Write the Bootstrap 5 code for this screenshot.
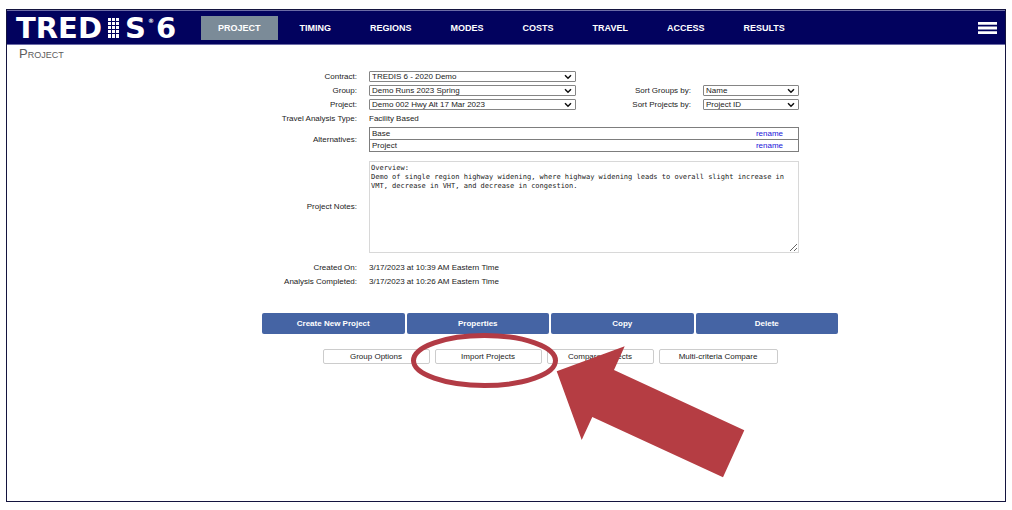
<!DOCTYPE html>
<html lang="en">
<head>
<meta charset="utf-8">
<meta name="viewport" content="width=device-width, initial-scale=1">
<title>TREDIS 6 - Project</title>
<link href="https://cdn.jsdelivr.net/npm/bootstrap@5.3.0/dist/css/bootstrap.min.css" rel="stylesheet">
<style>
  body { font-family: "Liberation Sans", Arial, sans-serif; font-size: 8px; line-height: 11px; color: #222; background: #fff; padding: 9px 6px 8px; }
  .app-frame { border: 1px solid #14143f; }
  .app-bar { background: #02025e; border: solid #6c6ca6; border-width: 1px 0; padding: 0 8px 0 9px; height: 35px; }
  .brand-logo { font: bold 29px/28px "DejaVu Sans", sans-serif; color: #fff; width: 185px; gap: 6px; }
  .brand-logo:hover { color: #fff; }
  .brand-logo sup { font-size: 6px; line-height: 6px; top: 0; margin: 4px -4px 0; align-self: flex-start; }
  .app-bar .nav-link { font-size: 9px; line-height: 12px; font-weight: bold; color: #fff; padding: 6px 17px; border-radius: 0; }
  .app-bar .nav-link.active { background: #7b8b98; color: #fff; }
  .main-nav { gap: 5px; }
  .menu-btn { line-height: 0; }
  .page-title { font-size: 13px; line-height: 16px; font-variant: small-caps; color: #5c5c5c; padding: 1px 0 9px 12px; }
  .work-area { padding-left: 88px; }
  .work-col { max-width: 576px; }
  .project-form { display: grid; grid-template-columns: 95px 207px 1fr 96px; column-gap: 12px; row-gap: 3px; margin-right: 39px; align-items: center; }
  .project-form label, .field-name { text-align: right; line-height: 10px; }
  .span-rest { grid-column: 2 / -1; }
  .pick { font-size: 8px; line-height: 9px; height: 11px; min-height: 0; padding: 0 14px 0 2px; border: 1px solid #858585; border-radius: 1px; color: #222;
    background-image: url("data:image/svg+xml,%3Csvg xmlns='http://www.w3.org/2000/svg' viewBox='0 0 8 6'%3E%3Cpath d='M1 1.2 4 4.2 7 1.2' fill='none' stroke='%23111' stroke-width='1.5'/%3E%3C/svg%3E");
    background-size: 8px 6px; background-position: right 3px center; }
  .alt-table { font-size: 8px; line-height: 11px; border: 1px solid #7d7d7d; color: #222; }
  .alt-table td { border: solid #7d7d7d; border-width: 1px 0; padding: 0 2px; height: 12px; }
  .alt-table td + td { text-align: right; padding-right: 15px; }
  .alt-table a { color: #1a12d8; text-decoration: none; }
  .notes { font: 7px/9px "DejaVu Sans Mono", monospace; min-height: 0; height: 92px; padding: 2px 1px; border: 1px solid #d8d8d8; border-radius: 0; color: #222; resize: both; }
  .notes-gap { margin-top: 6px; }
  .actions { margin-top: 26px; }
  .main-row { gap: 2px; }
  .act-btn { font-size: 8px; line-height: 11px; font-weight: bold; color: #fff; background: #4564a4; border: 0; border-radius: 2px; padding: 5px; }
  .sub-row { gap: 5px; margin-top: 15px; }
  .sub-btn { font-size: 8px; line-height: 11px; color: #222; background: #fff; border: 1px solid #ccc; border-radius: 2px; padding: 1px 4px; width: 107px; }
  .sub-btn.wide-btn { width: 119px; }
  .callout-art { left: 0; top: 0; pointer-events: none; }
</style>
<script src="https://cdn.jsdelivr.net/npm/bootstrap@5.3.0/dist/js/bootstrap.bundle.min.js" defer></script>
</head>
<body class="min-vh-100 d-flex flex-column">
<div class="app-frame flex-grow-1">
  <header class="app-bar d-flex align-items-center">
    <a href="#" class="brand-logo d-flex align-items-center text-decoration-none" aria-label="TREDIS 6">
      <span>TRED</span>
      <svg width="11" height="20" viewBox="0 0 11 20" fill="#fff" aria-hidden="true">
        <path d="M0 0h3v3H0zM4 0h3v3H4zM8 0h3v3H8zM0 4h3v3H0zM4 4h3v3H4zM8 4h3v3H8zM0 8h3v3H0zM4 8h3v3H4zM8 8h3v3H8zM0 12h3v3H0zM4 12h3v3H4zM8 12h3v3H8zM0 16h3v4H0zM4 16h3v4H4zM8 16h3v4H8z"/>
      </svg>
      <span>S</span><sup>®</sup><span>6</span>
    </a>
    <nav class="nav main-nav flex-nowrap">
      <a class="nav-link active" aria-current="page" href="#">PROJECT</a>
      <a class="nav-link" href="#">TIMING</a>
      <a class="nav-link" href="#">REGIONS</a>
      <a class="nav-link" href="#">MODES</a>
      <a class="nav-link" href="#">COSTS</a>
      <a class="nav-link" href="#">TRAVEL</a>
      <a class="nav-link" href="#">ACCESS</a>
      <a class="nav-link" href="#">RESULTS</a>
    </nav>
    <button type="button" class="btn menu-btn border-0 p-0 ms-auto" aria-label="Menu">
      <svg width="19" height="12" viewBox="0 0 19 12" fill="#fff" aria-hidden="true"><path d="M0 0h19v2.8H0zM0 4.6h19v2.8H0zM0 9.2h19V12H0z"/></svg>
    </button>
  </header>
  <h1 class="page-title m-0 fw-normal">Project</h1>
  <main class="work-area">
    <div class="work-col mx-auto">
      <form class="project-form">
        <label for="contract">Contract:</label>
        <select id="contract" class="form-select pick"><option>TREDIS 6 - 2020 Demo</option></select>
        <span></span><span></span>

        <label for="group">Group:</label>
        <select id="group" class="form-select pick"><option>Demo Runs 2023 Spring</option></select>
        <label for="sortGroups">Sort Groups by:</label>
        <select id="sortGroups" class="form-select pick"><option>Name</option></select>

        <label for="project">Project:</label>
        <select id="project" class="form-select pick"><option>Demo 002 Hwy Alt 17 Mar 2023</option></select>
        <label for="sortProjects">Sort Projects by:</label>
        <select id="sortProjects" class="form-select pick"><option>Project ID</option></select>

        <span class="field-name">Travel Analysis Type:</span>
        <span class="span-rest">Facility Based</span>

        <span class="field-name">Alternatives:</span>
        <table class="alt-table span-rest w-100">
          <tbody>
            <tr><td>Base</td><td><a href="#">rename</a></td></tr>
            <tr><td>Project</td><td><a href="#">rename</a></td></tr>
          </tbody>
        </table>

        <label for="notes" class="notes-gap">Project Notes:</label>
        <textarea id="notes" class="form-control notes notes-gap span-rest" spellcheck="false">Overview:
Demo of single region highway widening, where highway widening leads to overall slight increase in VMT, decrease in VHT, and decrease in congestion.</textarea>

        <span class="field-name notes-gap">Created On:</span>
        <span class="span-rest notes-gap">3/17/2023 at 10:39 AM Eastern Time</span>

        <span class="field-name">Analysis Completed:</span>
        <span class="span-rest">3/17/2023 at 10:26 AM Eastern Time</span>
      </form>

      <div class="actions position-relative">
        <div class="main-row d-flex">
          <button type="button" class="btn act-btn flex-fill w-25">Create New Project</button>
          <button type="button" class="btn act-btn flex-fill w-25">Properties</button>
          <button type="button" class="btn act-btn flex-fill w-25">Copy</button>
          <button type="button" class="btn act-btn flex-fill w-25">Delete</button>
        </div>
        <div class="sub-row d-flex justify-content-center">
          <button type="button" class="btn sub-btn">Group Options</button>
          <button type="button" class="btn sub-btn">Import Projects</button>
          <button type="button" class="btn sub-btn">Compare Projects</button>
          <button type="button" class="btn sub-btn wide-btn">Multi-criteria Compare</button>
        </div>
        <svg class="callout-art position-absolute" width="500" height="170" viewBox="0 0 500 170" aria-hidden="true">
          <ellipse cx="222.5" cy="47.5" rx="71" ry="25" fill="none" stroke="#b23b45" stroke-width="5"/>
          <path d="M294.7 58.3 362.7 33.3 352 57 482.3 117.3 461 164.3 330.3 104 319.7 127z" fill="#b53d43"/>
        </svg>
      </div>
    </div>
  </main>
</div>
</body>
</html>
